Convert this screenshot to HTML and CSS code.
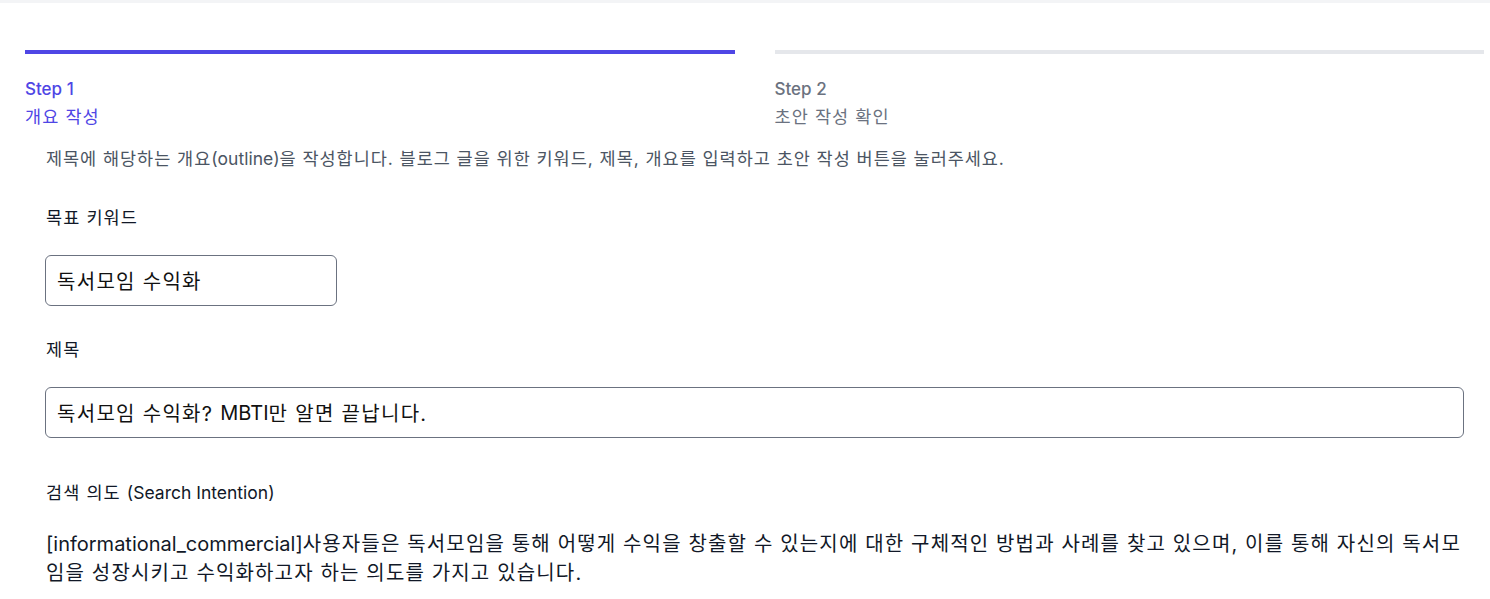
FILE: index.html
```html
<!DOCTYPE html>
<html lang="ko">
<head>
<meta charset="utf-8">
<title>개요 작성</title>
<link rel="stylesheet" href="styles.css">
</head>
<body>
<div class="topbar"></div>
<nav class="steps">
  <div class="step step-active">
    <div class="step-title">Step 1</div>
    <div class="step-sub">개요 작성</div>
  </div>
  <div class="step">
    <div class="step-title">Step 2</div>
    <div class="step-sub">초안 작성 확인</div>
  </div>
</nav>
<main class="content">
  <p class="desc">제목에 해당하는 개요<span class="en">(outline)</span>을 작성합니다. 블로그 글을 위한 키워드, 제목, 개요를 입력하고 초안 작성 버튼을 눌러주세요.</p>
  <div class="label label-first">목표 키워드</div>
  <div class="field field-short">독서모임 수익화</div>
  <div class="label">제목</div>
  <div class="field">독서모임 수익화? <span class="en">MBTI</span>만 알면 끝납니다.</div>
  <div class="label label-intent">검색 의도 <span class="en">(Search Intention)</span></div>
  <p class="intent"><span class="en">[informational_commercial]</span>사용자들은 독서모임을 통해 어떻게 수익을 창출할 수 있는지에 대한 구체적인 방법과 사례를 찾고 있으며, 이를 통해 자신의 독서모임을 성장시키고 수익화하고자 하는 의도를 가지고 있습니다.</p>
</main>
</body>
</html>
```
FILE: styles.css
```css
* { box-sizing: border-box; }
body {
  margin: 0;
  background: #fff;
  font-family: Inter, "Noto Sans CJK KR", sans-serif;
  color: #111827;
}
.en { letter-spacing: 0; }
.topbar {
  height: 3px;
  background: #f3f4f6;
}
.steps {
  display: grid;
  grid-template-columns: 1fr 1fr;
  column-gap: 40px;
  padding: 47px 6px 0 25px;
}
.step {
  border-top: 4px solid #e5e7eb;
  padding-top: 21px;
  color: #6b7280;
}
.step-active {
  border-top-color: #4f46e5;
  color: #4f46e5;
}
.step-title {
  font-size: 17px;
  line-height: 28px;
  font-weight: 500;
}
.step-sub {
  font-size: 17.5px;
  line-height: 28px;
  letter-spacing: 1.1px;
}
.content {
  display: flex;
  flex-direction: column;
  align-items: flex-start;
  padding: 0 26px 0 45px;
}
.desc {
  margin: 15px 0 0 1px;
  font-size: 17.5px;
  line-height: 26px;
  letter-spacing: 0.95px;
  color: #4b5563;
}
.label {
  margin: 32px 0 25px 1px;
  font-size: 17.5px;
  line-height: 24px;
  letter-spacing: 1.1px;
  color: #111827;
}
.label-first { margin-top: 34px; }
.label-intent { margin-top: 43px; margin-bottom: 25px; }
.field {
  display: flex;
  align-items: center;
  width: 100%;
  height: 51px;
  padding: 0 11px;
  border: 1px solid #6b7280;
  border-radius: 6px;
  font-size: 20px;
  letter-spacing: 1.3px;
  color: #111;
  background: #fff;
  white-space: pre;
}
.field-short { width: 292px; }
.intent {
  margin: 0 0 0 1px;
  font-size: 20px;
  line-height: 29px;
  letter-spacing: 1.15px;
  color: #111827;
}
```
